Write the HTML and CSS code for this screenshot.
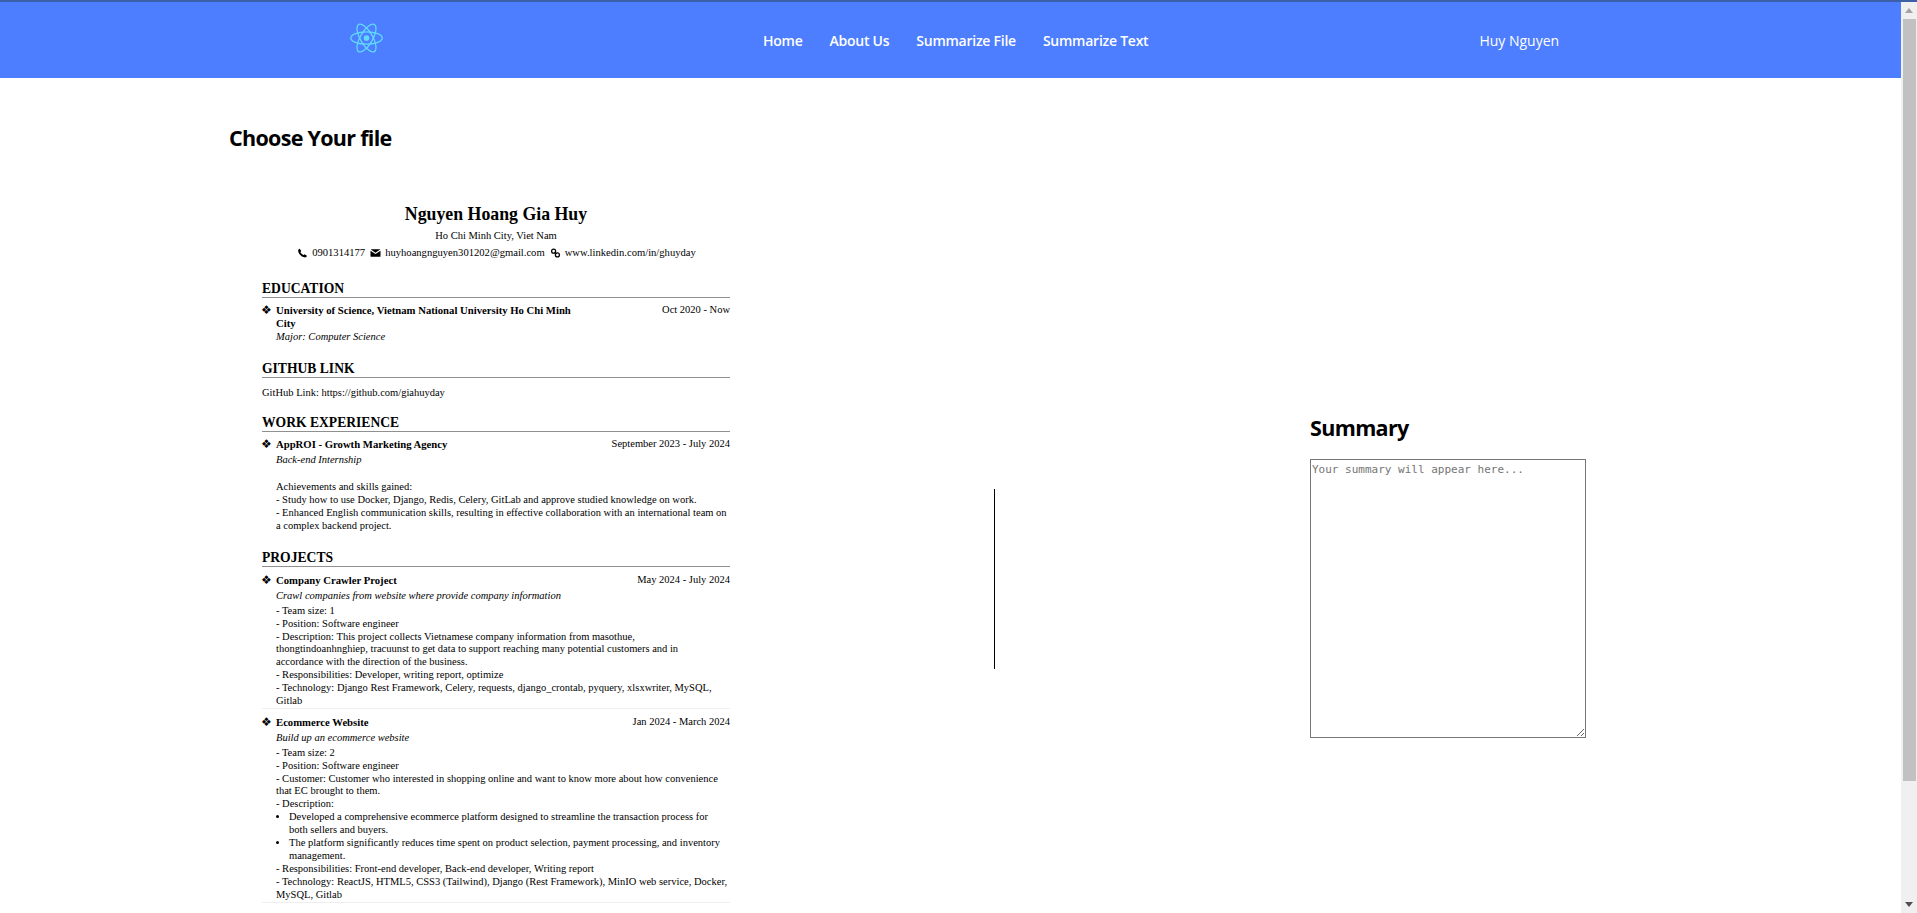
FILE: index.html
```html
<!DOCTYPE html>
<html lang="en">

<head>
    <meta charset="UTF-8">
    <meta name="viewport" content="width=device-width, initial-scale=1.0">
    <title>Summarize File</title>
    <link rel="stylesheet" href="styles.css">
</head>

<body>
    <div class="top-line"></div>
    <div class="window">
        <div class="app">
            <header class="navbar">
                <svg class="logo" viewBox="-14.5 -13 29 26" fill="none" stroke="#61dafb" stroke-width="1.1">
                    <circle r="2.5" fill="#61dafb" stroke="none"></circle>
                    <ellipse rx="13.8" ry="5.4"></ellipse>
                    <ellipse rx="13.8" ry="5.4" transform="rotate(60)"></ellipse>
                    <ellipse rx="13.8" ry="5.4" transform="rotate(120)"></ellipse>
                </svg>
                <nav class="nav-links">
                    <a href="#">Home</a>
                    <a href="#">About Us</a>
                    <a href="#">Summarize File</a>
                    <a href="#">Summarize Text</a>
                </nav>
                <a class="user-name" href="#">Huy Nguyen</a>
            </header>

            <main class="content">
                <h2 class="page-title">Choose Your file</h2>
                <div class="workspace">
                    <section class="file-panel">
                        <article class="resume">
                            <h1 class="resume-name">Nguyen Hoang Gia Huy</h1>
                            <p class="resume-city">Ho Chi Minh City, Viet Nam</p>
                            <p class="resume-contact">
                                <svg class="contact-icon" viewBox="0 0 16 16"><path d="M3.6 1 6 4.6 4.7 6.2c.9 2 2.6 3.8 5 5l1.600-1.400L15 12.300c-.3 1.500-1.400 2.700-3 2.700C6.500 15 1 8.500 1 4c0-1.500 1.100-2.700 2.600-3z"></path></svg>
                                <span>0901314177</span>
                                <svg class="contact-icon" viewBox="0 0 16 16"><path d="M0 4.200V13a1 1 0 0 0 1 1h14a1 1 0 0 0 1-1V4.200L8 9.500zM0.600 2.400 8 7.500l7.400-5.100A1 1 0 0 0 15 2H1a1 1 0 0 0-.4.4z"></path></svg>
                                <span>huyhoangnguyen301202@gmail.com</span>
                                <svg class="contact-icon" viewBox="0 0 16 16" fill="none" stroke="#000" stroke-width="2"><circle cx="5" cy="5" r="3.200"></circle><circle cx="11" cy="11" r="3.200"></circle><path d="M6.500 6.500 9.500 9.500"></path></svg>
                                <span>www.linkedin.com/in/ghuyday</span>
                            </p>

                            <h3 class="resume-heading">EDUCATION</h3>
                            <div class="entry">
                                <div class="entry-head">
                                    <span class="diamond">❖</span>
                                    <strong class="entry-title entry-title-short">University of Science, Vietnam National University Ho Chi Minh City</strong>
                                    <span class="entry-date">Oct 2020 - Now</span>
                                </div>
                                <div class="entry-body">
                                    <em class="entry-role entry-role-tight">Major: Computer Science</em>
                                </div>
                            </div>

                            <h3 class="resume-heading">GITHUB LINK</h3>
                            <p class="plain-line">GitHub Link: https://github.com/giahuyday</p>

                            <h3 class="resume-heading">WORK EXPERIENCE</h3>
                            <div class="entry">
                                <div class="entry-head">
                                    <span class="diamond">❖</span>
                                    <strong class="entry-title">AppROI - Growth Marketing Agency</strong>
                                    <span class="entry-date">September 2023 - July 2024</span>
                                </div>
                                <div class="entry-body">
                                    <em class="entry-role">Back-end Internship</em>
                                    <p class="spaced">Achievements and skills gained:</p>
                                    <p>- Study how to use Docker, Django, Redis, Celery, GitLab and approve studied knowledge on work.</p>
                                    <p>- Enhanced English communication skills, resulting in effective collaboration with an international team on a complex backend project.</p>
                                </div>
                            </div>

                            <h3 class="resume-heading">PROJECTS</h3>
                            <div class="entry entry-ruled">
                                <div class="entry-head">
                                    <span class="diamond">❖</span>
                                    <strong class="entry-title">Company Crawler Project</strong>
                                    <span class="entry-date">May 2024 - July 2024</span>
                                </div>
                                <div class="entry-body">
                                    <em class="entry-role">Crawl companies from website where provide company information</em>
                                    <p>- Team size: 1</p>
                                    <p>- Position: Software engineer</p>
                                    <p>- Description: This project collects Vietnamese company information from masothue,<br>thongtindoanhnghiep, tracuunst to get data to support reaching many potential customers and in<br>accordance with the direction of the business.</p>
                                    <p>- Responsibilities: Developer, writing report, optimize</p>
                                    <p>- Technology: Django Rest Framework, Celery, requests, django_crontab, pyquery, xlsxwriter, MySQL, Gitlab</p>
                                </div>
                            </div>
                            <div class="entry entry-ruled">
                                <div class="entry-head">
                                    <span class="diamond">❖</span>
                                    <strong class="entry-title">Ecommerce Website</strong>
                                    <span class="entry-date">Jan 2024 - March 2024</span>
                                </div>
                                <div class="entry-body">
                                    <em class="entry-role">Build up an ecommerce website</em>
                                    <p>- Team size: 2</p>
                                    <p>- Position: Software engineer</p>
                                    <p>- Customer: Customer who interested in shopping online and want to know more about how convenience that EC brought to them.</p>
                                    <p>- Description:</p>
                                    <ul class="entry-list">
                                        <li>Developed a comprehensive ecommerce platform designed to streamline the transaction process for<br>both sellers and buyers.</li>
                                        <li>The platform significantly reduces time spent on product selection, payment processing, and inventory management.</li>
                                    </ul>
                                    <p>- Responsibilities: Front-end developer, Back-end developer, Writing report</p>
                                    <p>- Technology: ReactJS, HTML5, CSS3 (Tailwind), Django (Rest Framework), MinIO web service, Docker, MySQL, Gitlab</p>
                                </div>
                            </div>
                        </article>
                    </section>

                    <div class="divider"></div>

                    <section class="summary-panel">
                        <h2 class="summary-title">Summary</h2>
                        <textarea class="summary-box" placeholder="Your summary will appear here..."></textarea>
                    </section>
                </div>
            </main>
        </div>

        <div class="scrollbar">
            <div class="scroll-arrow"><svg width="8" height="5"><path d="M4 0 8 5H0z" fill="#a3a3a3"></path></svg></div>
            <div class="scroll-thumb"></div>
            <div class="scroll-track"></div>
            <div class="scroll-arrow"><svg width="8" height="5"><path d="M0 0H8L4 5z" fill="#505050"></path></svg></div>
        </div>
    </div>
</body>

</html>
```

FILE: styles.css
```css
/* Basic reset */
* {
    margin: 0;
    padding: 0;
    box-sizing: border-box;
}

html,
body {
    height: 100%;
    overflow: hidden;
}

body {
    font-family: "Open Sans", sans-serif;
    background-color: #fff;
    color: #000;
}

.top-line {
    height: 2px;
    background-color: #3d5fa8;
}

.window {
    display: flex;
    height: calc(100vh - 2px);
}

.app {
    flex: 1;
    min-width: 0;
    overflow: hidden;
}

/* Page scrollbar */
.scrollbar {
    width: 16px;
    display: flex;
    flex-direction: column;
    background-color: #f0f0f0;
}

.scroll-arrow {
    height: 17px;
    display: flex;
    align-items: center;
    justify-content: center;
}

.scroll-thumb {
    height: 762px;
    margin: 0 1px 0 2px;
    background-color: #c1c1c1;
}

.scroll-track {
    flex: 1;
}

/* Navbar */
.navbar {
    height: 76px;
    background-color: #4d7eff;
    display: flex;
    align-items: center;
    padding-left: 350px;
}

.logo {
    width: 33px;
    height: 30px;
    margin-top: -4px;
}

.nav-links {
    display: flex;
    gap: 27px;
    margin-left: 380px;
}

.nav-links a,
.user-name {
    color: #fff;
    text-decoration: none;
    font-size: 14px;
    font-weight: 600;
    letter-spacing: -0.25px;
}

.user-name {
    font-weight: 400;
    letter-spacing: 0;
    margin-left: 331px;
}

/* Main area */
.content {
    padding: 44px 0 60px 229px;
}

.page-title {
    font-size: 21.5px;
    font-weight: 700;
    line-height: 32px;
    letter-spacing: -0.7px;
    margin-bottom: 49px;
}

.workspace {
    display: flex;
    align-items: center;
}

.file-panel {
    width: 765px;
    padding: 0 264px 52px 33px;
}

.divider {
    width: 1px;
    height: 180px;
    background-color: #000;
}

.summary-panel {
    margin-left: 315px;
    margin-bottom: 8px;
}

.summary-title {
    font-size: 21.5px;
    font-weight: 700;
    line-height: 32px;
    letter-spacing: -0.65px;
    margin-bottom: 15px;
}

.summary-box {
    display: block;
    width: 276px;
    height: 279px;
    padding: 3px 2px 2px 1px;
    border: 1px solid #767676;
    font-family: "DejaVu Sans Mono", monospace;
    font-size: 11px;
}

/* Resume */
.resume {
    font-family: "Liberation Serif", serif;
    font-size: 10.5px;
    line-height: 12.9px;
}

.resume-name {
    font-size: 17.8px;
    line-height: 22px;
    text-align: center;
}

.resume-city {
    text-align: center;
    margin-top: 5px;
}

.resume-contact {
    display: flex;
    justify-content: center;
    align-items: center;
    gap: 4px;
    margin-top: 4px;
    font-size: 10.6px;
}

.contact-icon {
    width: 11px;
    height: 10px;
    margin-left: 1px;
}

.resume-heading {
    font-size: 13.6px;
    line-height: 16px;
    border-bottom: 1px solid #909090;
    margin-top: 17px;
}

.resume-contact + .resume-heading {
    margin-top: 21px;
}

.entry {
    margin-top: 6px;
}

.entry-ruled {
    margin-top: 7px;
    border-bottom: 1px solid #eee;
}

.entry-ruled + .entry-ruled {
    margin-top: 7px;
}

.entry-head {
    display: flex;
    justify-content: space-between;
}

.diamond {
    width: 15px;
    flex-shrink: 0;
    font-family: "DejaVu Sans", sans-serif;
    font-size: 12px;
    margin-left: -1px;
}

.entry-title {
    flex: 1;
    font-size: 10.7px;
}

.entry-title-short {
    flex: none;
    width: 310px;
    margin-right: auto;
}

.entry-body {
    padding-left: 14px;
}

.entry-role {
    display: block;
    margin-top: 3.5px;
    margin-bottom: 1.5px;
}

.entry-role-tight {
    margin-top: 1.5px;
}

.spaced {
    margin-top: 14px;
}

.plain-line {
    margin-top: 9px;
    margin-bottom: -2px;
}

.entry-list {
    padding-left: 13px;
}
```
